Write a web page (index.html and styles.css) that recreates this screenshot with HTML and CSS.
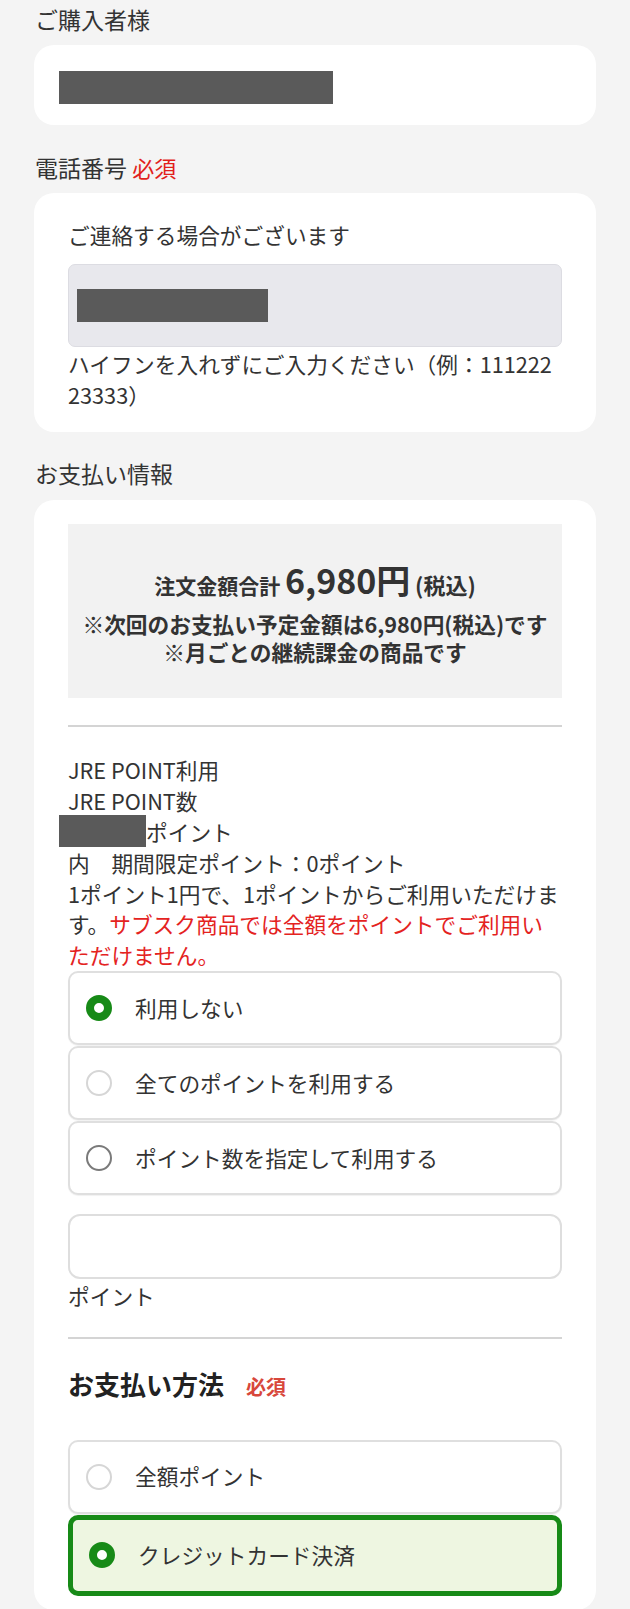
FILE: index.html
```html
<!DOCTYPE html>
<html lang="ja">
<head>
<meta charset="utf-8">
<title>ご購入手続き</title>
<link rel="stylesheet" href="styles.css">
</head>
<body>
<main class="page">
  <section class="section">
    <h2 class="section-title">ご購入者様</h2>
    <div class="card card--buyer">
      <span class="redact redact--name"></span>
    </div>
  </section>

  <section class="section">
    <h2 class="section-title">電話番号 <span class="required">必須</span></h2>
    <div class="card card--phone">
      <p class="note">ご連絡する場合がございます</p>
      <div class="field-input"><span class="redact redact--phone"></span></div>
      <p class="help">ハイフンを入れずにご入力ください（例：11122223333）</p>
    </div>
  </section>

  <section class="section">
    <h2 class="section-title">お支払い情報</h2>
    <div class="card card--payment">
      <div class="summary">
        <p class="summary-total">注文金額合計 <span class="summary-amount">6,980円</span> <span class="summary-tax">(税込)</span></p>
        <p class="summary-note">※次回のお支払い予定金額は6,980円(税込)です</p>
        <p class="summary-note">※月ごとの継続課金の商品です</p>
      </div>

      <hr class="divider divider--summary">

      <div class="points-info">
        <p>JRE POINT利用</p>
        <p>JRE POINT数</p>
        <p class="points-balance"><span class="redact redact--points"></span>ポイント</p>
        <p>内　期間限定ポイント：0ポイント</p>
        <p>1ポイント1円で、1ポイントからご利用いただけます。<span class="notice-red">サブスク商品では全額をポイントでご利用いただけません。</span></p>
      </div>

      <div class="option-list">
        <label class="option"><span class="radio radio--checked"></span><span class="option-label">利用しない</span></label>
        <label class="option"><span class="radio"></span><span class="option-label">全てのポイントを利用する</span></label>
        <label class="option"><span class="radio radio--dark"></span><span class="option-label">ポイント数を指定して利用する</span></label>
      </div>

      <div class="points-input"></div>
      <p class="unit">ポイント</p>

      <hr class="divider divider--method">

      <h3 class="method-title">お支払い方法<span class="required required--method">必須</span></h3>

      <div class="option-list option-list--method">
        <label class="option"><span class="radio"></span><span class="option-label">全額ポイント</span></label>
        <label class="option option--selected"><span class="radio radio--checked"></span><span class="option-label">クレジットカード決済</span></label>
      </div>
    </div>
  </section>
</main>
</body>
</html>
```

FILE: styles.css
```css
* {
  box-sizing: border-box;
  margin: 0;
  padding: 0;
}

html,
body {
  background: #f4f4f4;
}

body {
  font-family: "Noto Sans CJK JP", "Noto Sans", sans-serif;
  font-size: 21.7px;
  line-height: 30.8px;
  color: #333;
}

.page {
  padding: 2.5px 34px 0;
}

.section + .section {
  margin-top: 25.5px;
}

.section-title {
  font-size: 23px;
  font-weight: 400;
  line-height: 32px;
  margin-bottom: 10.5px;
  padding-left: 1px;
  color: #333;
}

.required {
  color: #e21f1c;
  font-size: 22px;
}

.card {
  background: #fff;
  border-radius: 20px;
}

.redact {
  display: block;
  background: #5a5a5a;
}

.card--buyer {
  padding: 26px 25px 21px;
}

.redact--name {
  width: 274px;
  height: 33px;
}

.card--phone {
  padding: 26.5px 34px 21px;
}

.field-input {
  margin-top: 14px;
  height: 83px;
  border: 1px solid #dcdce2;
  border-radius: 7px;
  background: #e8e8ed;
  padding: 24px 0 0 8px;
}

.redact--phone {
  width: 191px;
  height: 33px;
}

.help {
  margin-top: 2px;
  word-break: break-all;
}

.card--payment {
  padding: 24px 34px 14px;
}

.summary {
  background: #f2f2f2;
  padding: 39px 0 32px;
  text-align: center;
  font-weight: 700;
  color: #333;
}

.summary-total {
  height: 44px;
  line-height: 44px;
  margin-bottom: 3px;
  font-size: 21px;
}

.summary-amount,
.summary-tax {
  line-height: 1;
}

.summary-amount {
  font-size: 34px;
}

.summary-tax {
  font-size: 22px;
}

.summary-note {
  line-height: 28px;
}

.divider {
  border: 0;
  border-top: 2px solid #d4d4d4;
}

.divider--summary {
  margin-top: 27px;
}

.points-info {
  margin-top: 28.5px;
}

.points-balance {
  display: flex;
  align-items: center;
  height: 30.8px;
}

.redact--points {
  width: 87px;
  height: 32px;
  margin-left: -9px;
  margin-top: -3px;
}

.notice-red {
  color: #e4231f;
}

.option {
  display: flex;
  align-items: center;
  height: 74px;
  padding-left: 16px;
  border: 2px solid #dfdfdf;
  border-radius: 10px;
  background: #fff;
  box-shadow: 0 1px 1px rgba(0, 0, 0, 0.06);
}

.option + .option {
  margin-top: 1px;
}

.radio {
  flex: none;
  width: 26px;
  height: 26px;
  margin-right: 23px;
  border: 2px solid #d6d6d6;
  border-radius: 50%;
  background: #fff;
}

.radio--checked {
  border: 8px solid #178a17;
}

.radio--dark {
  border: 2.5px solid #7a7a7a;
}

.option-label {
  color: #333;
}

.option--selected {
  height: 81px;
  border: 5px solid #178a17;
  background: #eef6e1;
  box-shadow: none;
}

.points-input {
  margin-top: 19px;
  height: 65px;
  border: 2px solid #dedede;
  border-radius: 12px;
  background: #fff;
}

.unit {
  margin-top: 2.5px;
}

.divider--method {
  margin-top: 24.5px;
}

.method-title {
  display: flex;
  align-items: baseline;
  gap: 22px;
  margin-top: 27.5px;
  font-size: 26px;
  line-height: 36px;
  font-weight: 700;
  color: #222;
}

.required--method {
  font-size: 20px;
  font-weight: 700;
  color: #d8473b;
}

.option-list--method {
  margin-top: 34.5px;
}
```
